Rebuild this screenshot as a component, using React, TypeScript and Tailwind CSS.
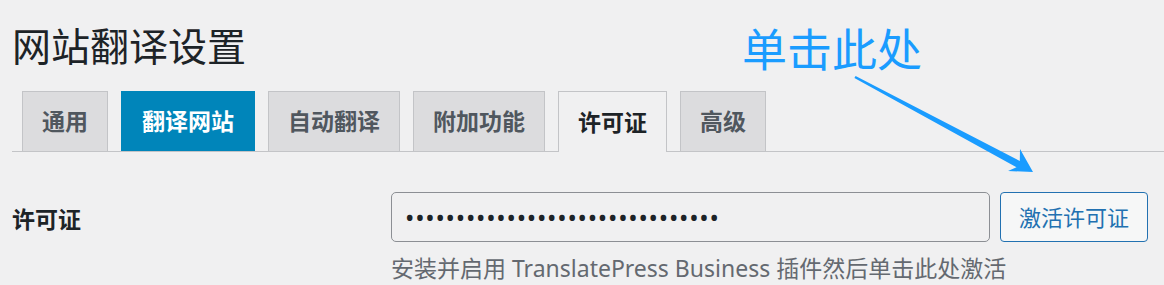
const tabs = [
  { label: "通用", state: "idle" },
  { label: "翻译网站", state: "blue" },
  { label: "自动翻译", state: "idle" },
  { label: "附加功能", state: "idle" },
  { label: "许可证", state: "active" },
  { label: "高级", state: "idle" },
];

function Tab({ label, state }: { label: string; state: string }) {
  if (state === "blue") {
    return (
      <div className="h-[60px] px-[20px] flex items-center bg-[#0085ba] border border-b-0 border-[#0085ba] text-white text-[23px] font-bold">
        {label}
      </div>
    );
  }
  if (state === "active") {
    return (
      <div className="h-[61px] -mb-px px-[19px] flex items-center bg-[#f0f0f1] border border-b-0 border-[#c3c4c7] text-[#1d2327] text-[23px] font-bold">
        {label}
      </div>
    );
  }
  return (
    <div className="h-[60px] px-[19px] flex items-center bg-[#dcdcde] border border-b-0 border-[#c3c4c7] text-[#50575e] text-[23px] font-bold">
      {label}
    </div>
  );
}

export default function App() {
  return (
    <div
      className="relative w-[1164px] h-[285px] overflow-hidden bg-[#f0f0f1] pl-[12px]"
      style={{ fontFamily: '"Noto Sans", "Noto Sans CJK SC", sans-serif' }}
    >
      <h1 className="pt-[22px] text-[39px] leading-[47px] font-normal text-[#1d2327]">网站翻译设置</h1>

      <nav className="mt-[22px] pl-[10px] flex items-end gap-[13px] border-b border-[#c3c4c7]">
        {tabs.map((t) => (
          <Tab key={t.label} label={t.label} state={t.state} />
        ))}
      </nav>

      <div className="mt-[40px] flex items-start">
        <div className="w-[379px] pt-[12px] text-[23px] leading-[30px] font-bold text-[#1d2327]">许可证</div>
        <div>
          <div className="flex items-center">
            <div className="w-[599px] h-[50px] rounded-[5px] border border-[#8c8f94] bg-[#f0f0f1] pl-[13px] flex items-center text-[#1d2327] text-[25px] leading-none tracking-[0.75px]">
              •••••••••••••••••••••••••••••••
            </div>
            <button className="ml-[10px] w-[148px] h-[50px] rounded-[4px] border border-[#2271b1] bg-[#f6f7f7] text-[#2271b1] text-[22px]">
              激活许可证
            </button>
          </div>
          <p className="mt-[11px] text-[23px] leading-[30px] text-[#646970]">
            安装并启用 TranslatePress Business 插件然后单击此处激活
          </p>
        </div>
      </div>

      <div className="absolute left-[742px] top-[22px] text-[45px] leading-[56px] text-[#1a9cff]">单击此处</div>

      <svg className="absolute left-0 top-0 pointer-events-none" width="1164" height="285" viewBox="0 0 1164 285">
        <polygon
          points="855.6,75.9 1019.8,161 1020,149 1033,172 1008,171 1016.5,167.2 854.4,78.1"
          fill="#1a9cff"
        />
      </svg>
    </div>
  );
}
